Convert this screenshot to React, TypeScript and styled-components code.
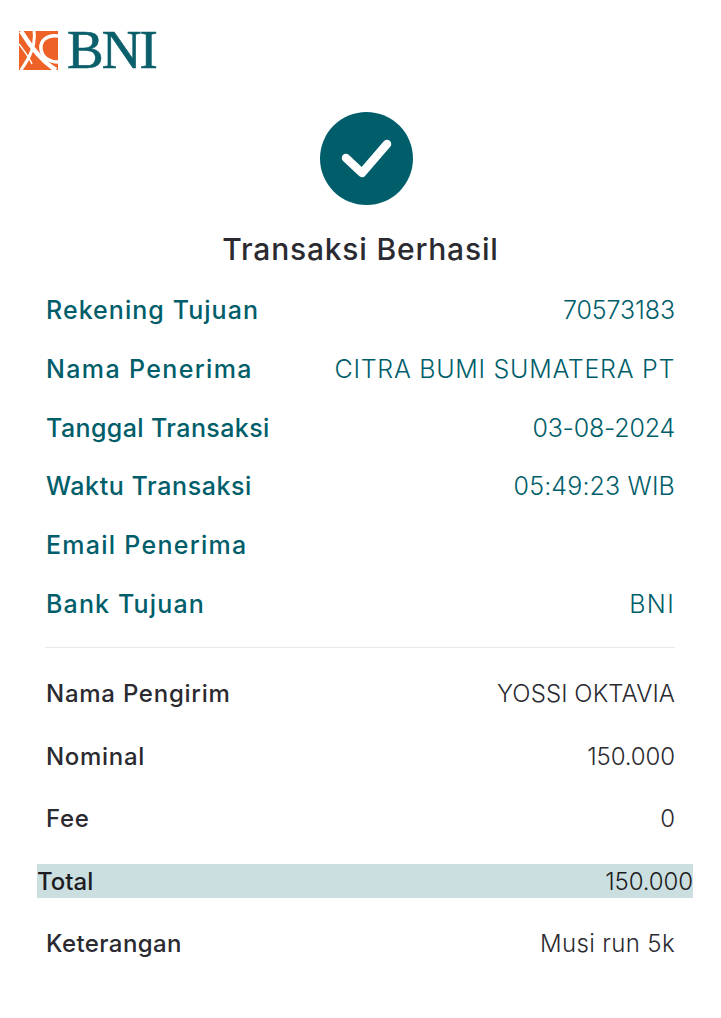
import React from "react";
import styled, { createGlobalStyle } from "styled-components";

const GlobalStyle = createGlobalStyle`
  html, body {
    margin: 0;
    padding: 0;
    background: #ffffff;
    font-family: "Inter", "Noto Sans", sans-serif;
  }
`;

const Page = styled.div`
  width: 721px;
  height: 1018px;
  overflow: hidden;
  background: #ffffff;
  display: flex;
  flex-direction: column;
`;

const LogoBar = styled.div`
  display: flex;
  align-items: center;
  gap: 9px;
  height: 40px;
  padding: 30px 0 0 19px;
`;

const LogoText = styled.span`
  font-family: "Liberation Serif", serif;
  font-size: 55px;
  line-height: 40px;
  color: #0b5f6b;
  letter-spacing: -2px;
  -webkit-text-stroke: 0.6px #0b5f6b;
`;

const StatusIcon = styled.div`
  align-self: center;
  width: 93px;
  height: 93px;
  margin: 42px 0 0 11px;
`;

const Title = styled.h1`
  margin: 24px 0 0;
  height: 40px;
  line-height: 40px;
  text-align: center;
  font-size: 30px;
  font-weight: 500;
  letter-spacing: 0.8px;
  color: #2a2a30;
`;

const DetailList = styled.div`
  display: flex;
  flex-direction: column;
  padding: 11.7px 46px 0;
`;

const DetailRow = styled.div`
  display: flex;
  justify-content: space-between;
  align-items: center;
  height: 58.8px;
  font-size: 25px;
  color: #005e6a;
`;

const Label = styled.span<{ $spacing?: number }>`
  font-weight: 500;
  letter-spacing: ${(p) => p.$spacing ?? 0}px;
`;

const Value = styled.span<{ $spacing?: number }>`
  font-weight: 300;
  letter-spacing: ${(p) => p.$spacing ?? 0}px;
`;

const Divider = styled.hr`
  margin: 13.3px 46px 0 45px;
  border: 0;
  border-top: 1px solid #e8eaea;
`;

const SummaryList = styled.div`
  display: flex;
  flex-direction: column;
  padding: 14.6px 46px 0;
`;

const SummaryRow = styled.div`
  display: flex;
  justify-content: space-between;
  align-items: center;
  height: 62.5px;
  font-size: 24px;
  color: #2a2a30;
`;

const TotalRow = styled.div`
  box-sizing: border-box;
  display: flex;
  justify-content: space-between;
  align-items: center;
  height: 34px;
  padding-top: 2px;
  margin: 14px -18px 14px -9px;
  background: #cbdfe1;
  font-size: 24px;
  color: #1c1c20;
`;

const receiver = [
  { label: "Rekening Tujuan", value: "70573183", labelSpacing: 1.05, spacing: -0.1 },
  { label: "Nama Penerima", value: "CITRA BUMI SUMATERA PT", labelSpacing: 1.36, spacing: 0.72 },
  { label: "Tanggal Transaksi", value: "03-08-2024", labelSpacing: 0.4, spacing: -0.2 },
  { label: "Waktu Transaksi", value: "05:49:23 WIB", labelSpacing: 0.58, spacing: 0.15 },
  { label: "Email Penerima", value: "", labelSpacing: 1.26, spacing: 0 },
  { label: "Bank Tujuan", value: "BNI", labelSpacing: 1.14, spacing: 1.3 },
];

const sender = [
  { label: "Nama Pengirim", value: "YOSSI OKTAVIA", labelSpacing: 0.75, spacing: 0.08 },
  { label: "Nominal", value: "150.000", labelSpacing: 0.7, spacing: -0.1 },
  { label: "Fee", value: "0", labelSpacing: 0.7, spacing: 0 },
];

const BniMark: React.FC = () => (
  <svg width="39" height="39" viewBox="0 0 39 39">
    <rect width="39" height="39" fill="#ee6127" />
    <g fill="none" stroke="#ffffff" strokeLinecap="butt">
      <path d="M2 0 C10 13 22 30 37 39" strokeWidth="4.5" />
      <path d="M0 13 C5 20 9 24 13 33" strokeWidth="1.5" />
      <path d="M15 0 C17 14 11 26 2 39" strokeWidth="3" />
      <path d="M39 5 C28 3 21 10 22 18 C23 27 31 31 39 31" strokeWidth="3.5" />
    </g>
  </svg>
);

const App: React.FC = () => {
  return (
    <Page>
      <GlobalStyle />
      <LogoBar>
        <BniMark />
        <LogoText>BNI</LogoText>
      </LogoBar>

      <StatusIcon>
        <svg width="93" height="93" viewBox="0 0 93 93">
          <circle cx="46.5" cy="46.5" r="46.5" fill="#005e6a" />
          <path
            d="M26 46 L42 61 L67 32"
            fill="none"
            stroke="#ffffff"
            strokeWidth="8.5"
            strokeLinecap="round"
            strokeLinejoin="round"
          />
        </svg>
      </StatusIcon>

      <Title>Transaksi Berhasil</Title>

      <DetailList>
        {receiver.map((row) => (
          <DetailRow key={row.label}>
            <Label $spacing={row.labelSpacing}>{row.label}</Label>
            <Value $spacing={row.spacing}>{row.value}</Value>
          </DetailRow>
        ))}
      </DetailList>

      <Divider />

      <SummaryList>
        {sender.map((row) => (
          <SummaryRow key={row.label}>
            <Label $spacing={row.labelSpacing}>{row.label}</Label>
            <Value $spacing={row.spacing}>{row.value}</Value>
          </SummaryRow>
        ))}
        <TotalRow>
          <Label>Total</Label>
          <Value $spacing={-0.1}>150.000</Value>
        </TotalRow>
        <SummaryRow>
          <Label $spacing={0.4}>Keterangan</Label>
          <Value $spacing={0.36}>Musi run 5k</Value>
        </SummaryRow>
      </SummaryList>
    </Page>
  );
};

export default App;
